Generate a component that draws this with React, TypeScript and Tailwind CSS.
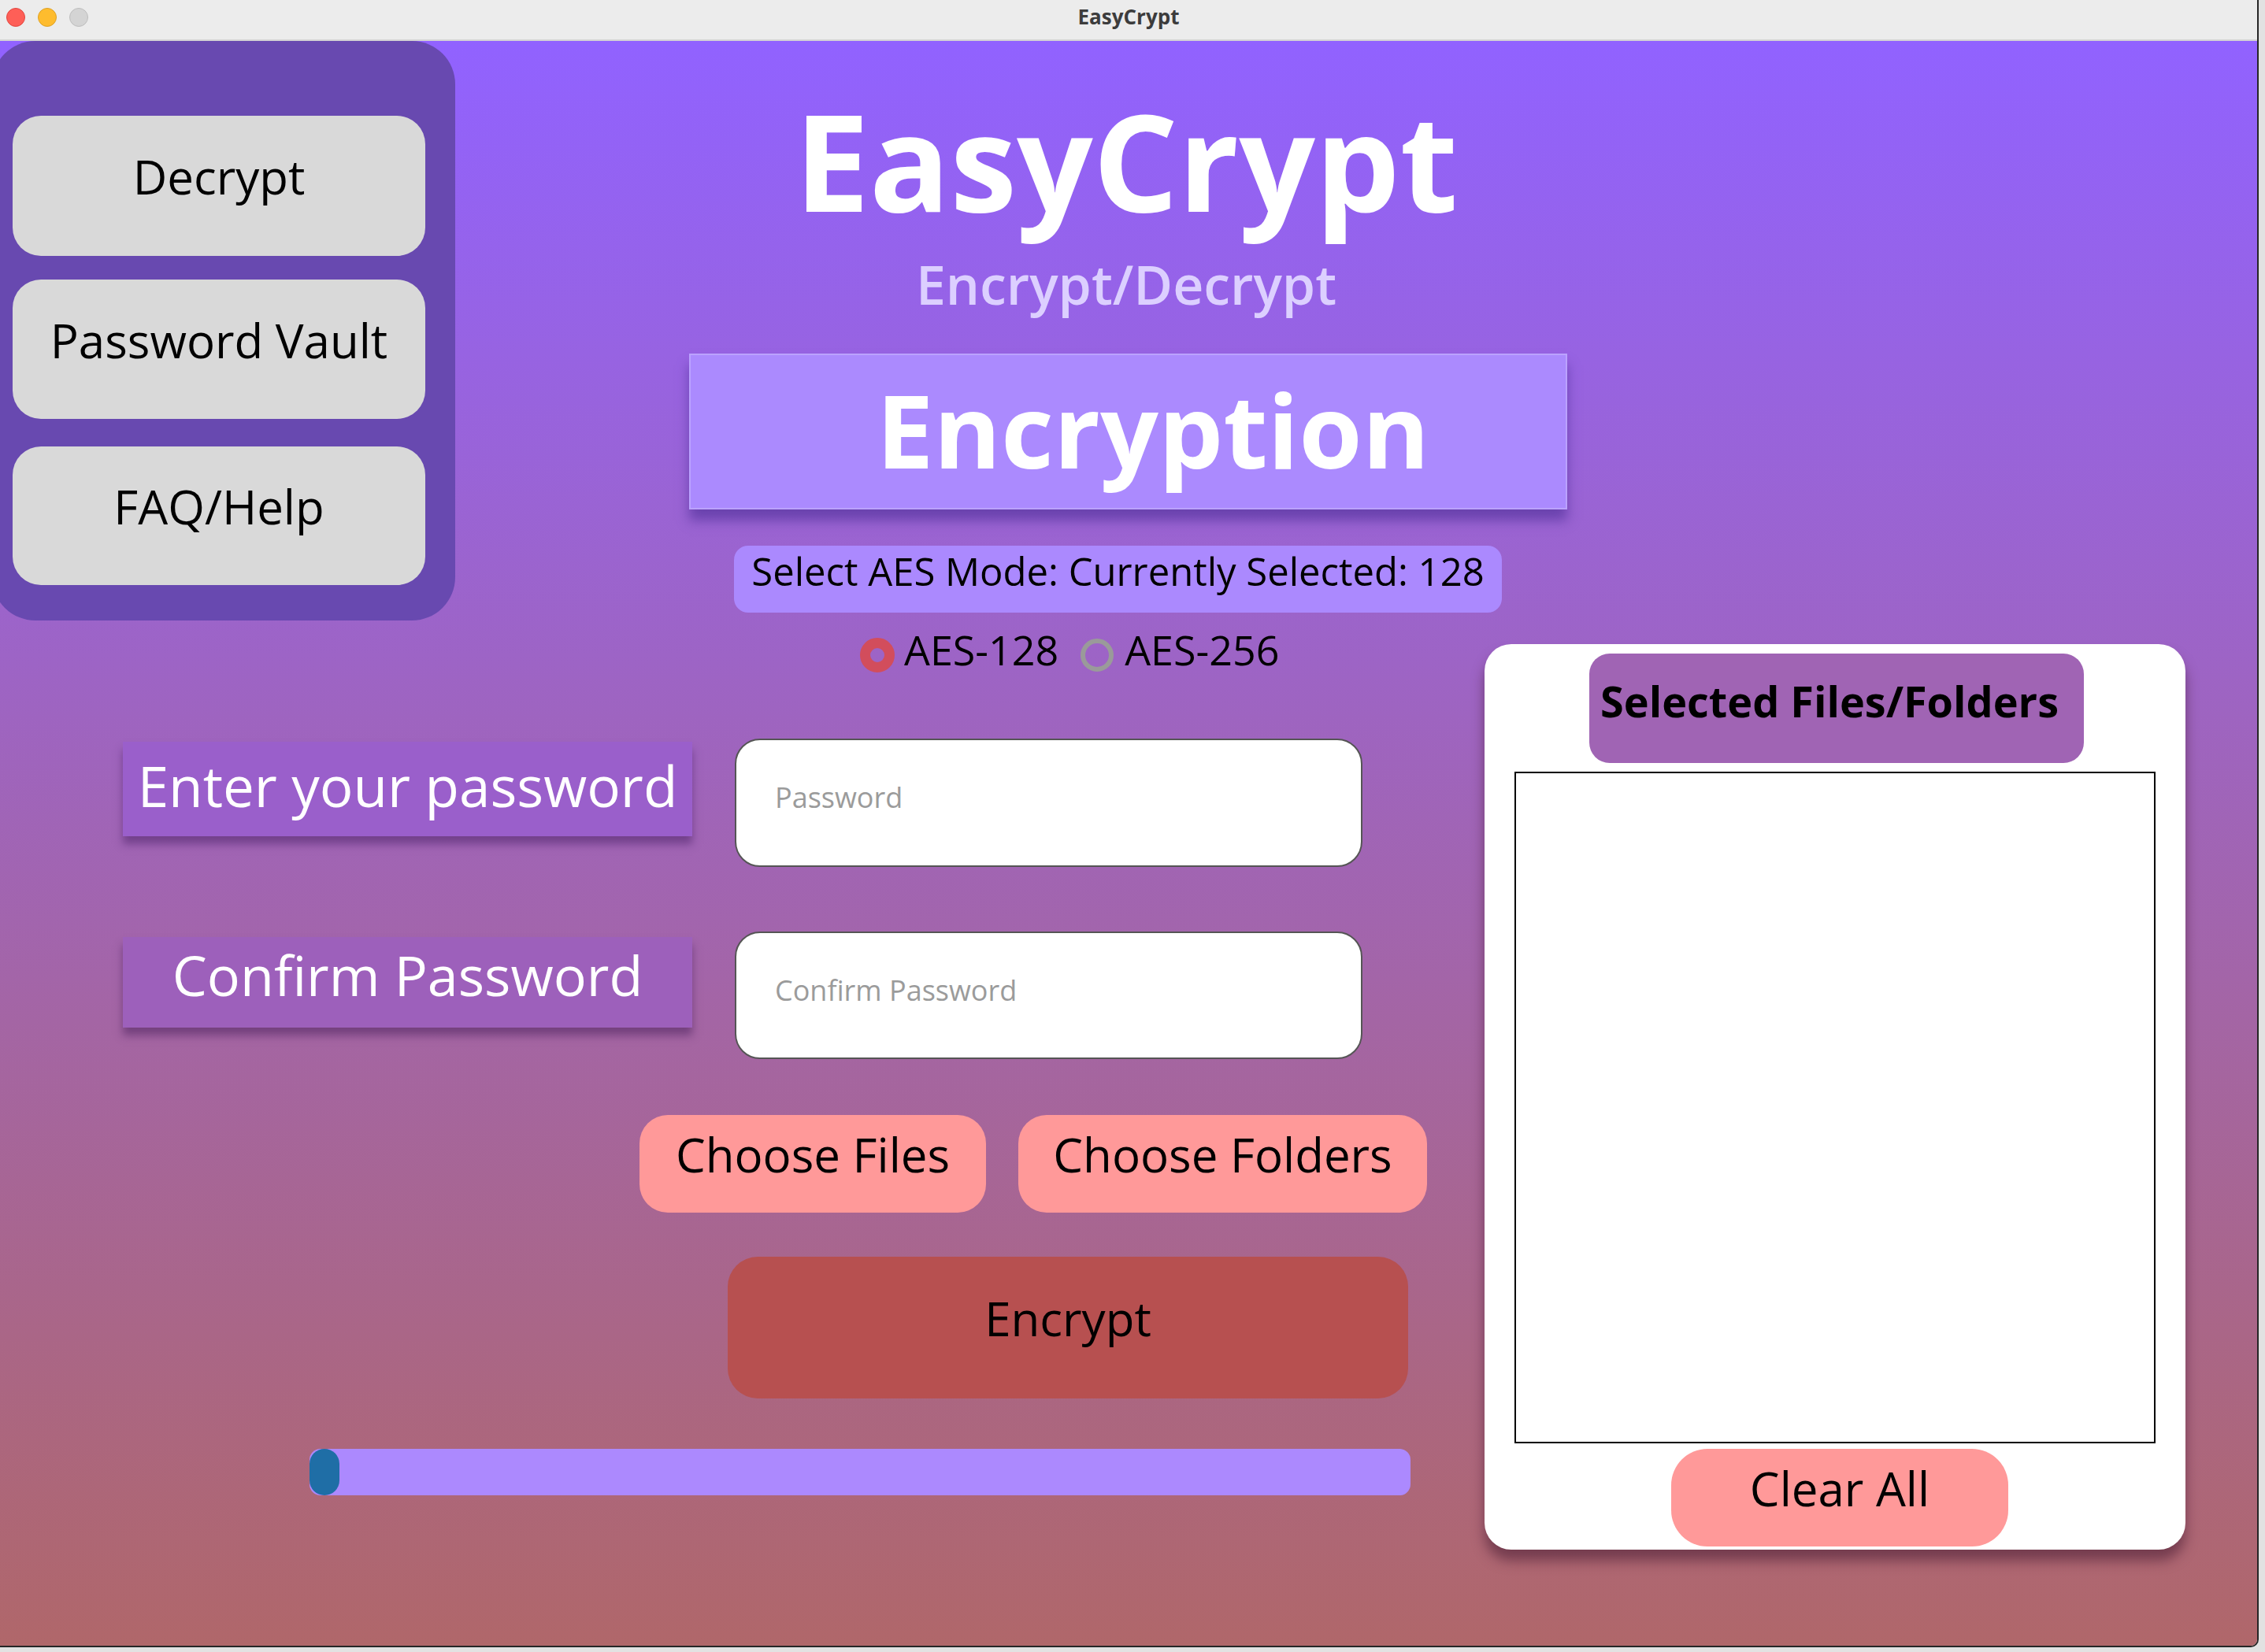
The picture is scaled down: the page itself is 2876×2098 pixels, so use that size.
import React from "react";

export default function App() {
  return (
    <div className="w-[2876px] h-[2098px] bg-[#e2e2e2] font-['Open_Sans',sans-serif] overflow-hidden">
      <div className="w-[2868px] h-[2092px] flex flex-col border-r-2 border-b-2 border-[#262626] rounded-br-[10px] overflow-hidden">
        {/* Title bar */}
        <div className="relative h-[52px] shrink-0 bg-[#ececec] border-b-2 border-[#d4d4d4] flex items-center justify-center pb-[8px]">
          <div className="absolute left-[8px] top-[10px] flex gap-[16px]">
            <span className="block w-[24px] h-[24px] rounded-full bg-[#fe5f57] border border-[#e2463f]" />
            <span className="block w-[24px] h-[24px] rounded-full bg-[#febc2e] border border-[#dea123]" />
            <span className="block w-[24px] h-[24px] rounded-full bg-[#d4d4d4] border border-[#bdbdbd]" />
          </div>
          <span className="text-[26px] font-bold text-[#3c3c3c] leading-none">EasyCrypt</span>
        </div>

        {/* Main */}
        <div className="flex-1 flex flex-col bg-[linear-gradient(to_bottom,#9162ff,#b0676a)]">
          {/* Top row */}
          <div className="flex items-start h-[736px]">
            <div className="-ml-[10px] w-[588px] h-[736px] shrink-0 rounded-[55px] bg-[#6849b0] pl-[26px] pt-[95px] flex flex-col">
              <button className="w-[524px] h-[178px] rounded-[36px] bg-[#d9d9d9] flex items-center justify-center pb-[24px] text-[60px] leading-none text-black">
                Decrypt
              </button>
              <button className="mt-[30px] w-[524px] h-[177px] rounded-[36px] bg-[#d9d9d9] flex items-center justify-center pb-[24px] text-[60px] leading-none text-black">
                Password Vault
              </button>
              <button className="mt-[35px] w-[524px] h-[176px] rounded-[36px] bg-[#d9d9d9] flex items-center justify-center pb-[24px] text-[60px] leading-none text-black">
                FAQ/Help
              </button>
            </div>

            <div className="flex-1 flex flex-col items-center pr-[584px]">
              <h1 className="mt-[66px] text-[170px] leading-none font-bold text-white">EasyCrypt</h1>
              <div className="mt-[39px] text-[68px] leading-none font-semibold text-[#dccfff]">Encrypt/Decrypt</div>
              <div className="mt-[54px] ml-[4px] w-[1115px] h-[198px] bg-[#ab8afe] border-2 border-[#bba2ff] shadow-[0_14px_14px_rgba(75,45,150,0.6)] flex items-center justify-center pb-[6px] pl-[64px]">
                <span className="text-[130px] leading-none font-bold text-white">Encryption</span>
              </div>
              <div className="mt-[46px] mr-[21px] w-[975px] h-[85px] rounded-[18px] bg-[#ab89fe] flex justify-center pt-[8px]">
                <span className="text-[49px] leading-none text-black">Select AES Mode: Currently Selected: 128</span>
              </div>
            </div>
          </div>

          {/* Bottom row */}
          <div className="flex items-start">
            <div className="w-[1885px] shrink-0 flex flex-col">
              {/* Radios */}
              <div className="mt-[21px] h-[46px] pl-[1092px] flex items-center">
                <span className="block w-[44px] h-[44px] rounded-full border-[13px] border-[#d24d5c]" />
                <span className="ml-[12px] mb-[14px] text-[52px] leading-none text-black">AES-128</span>
                <span className="ml-[28px] block w-[42px] h-[42px] rounded-full border-[6px] border-[#9a9a9a]" />
                <span className="ml-[14px] mb-[14px] text-[52px] leading-none text-black">AES-256</span>
              </div>

              {/* Password row */}
              <div className="mt-[83px] pl-[156px] flex items-start">
                <div className="mt-[4px] w-[723px] h-[120px] bg-[#9a5fcb] shadow-[0_10px_10px_rgba(70,30,100,0.5)] flex items-center justify-center pb-[10px]">
                  <span className="text-[71px] leading-none text-white whitespace-nowrap">Enter your password</span>
                </div>
                <input
                  type="password"
                  placeholder="Password"
                  className="ml-[54px] w-[797px] h-[163px] rounded-[32px] border-2 border-[#555555] bg-white pl-[49px] pb-[14px] text-[36px] text-black placeholder:text-[#9b9b9b] outline-none"
                />
              </div>

              {/* Confirm row */}
              <div className="mt-[82px] pl-[156px] flex items-start">
                <div className="mt-[7px] w-[723px] h-[115px] bg-[#9d60bb] shadow-[0_10px_10px_rgba(70,30,90,0.5)] flex items-center justify-center pb-[20px]">
                  <span className="text-[70px] leading-none text-white whitespace-nowrap">Confirm Password</span>
                </div>
                <input
                  type="password"
                  placeholder="Confirm Password"
                  className="ml-[54px] w-[797px] h-[162px] rounded-[32px] border-2 border-[#555555] bg-white pl-[49px] pb-[14px] text-[36px] text-black placeholder:text-[#9b9b9b] outline-none"
                />
              </div>

              {/* Choose buttons */}
              <div className="mt-[71px] pl-[812px] flex gap-[41px]">
                <button className="w-[440px] h-[124px] rounded-[36px] bg-[#ff9999] flex items-center justify-center pb-[24px] text-[60px] leading-none text-black">
                  Choose Files
                </button>
                <button className="w-[519px] h-[124px] rounded-[36px] bg-[#ff9999] flex items-center justify-center pb-[24px] text-[60px] leading-none text-black">
                  Choose Folders
                </button>
              </div>

              {/* Encrypt */}
              <button className="mt-[56px] ml-[924px] w-[864px] h-[180px] rounded-[38px] bg-[#b75050] flex items-center justify-center pb-[24px] text-[60px] leading-none text-black">
                Encrypt
              </button>

              {/* Progress */}
              <div className="mt-[64px] ml-[393px] w-[1398px] h-[59px] rounded-[14px] bg-[#ac89fe] flex">
                <div className="w-[38px] h-[59px] rounded-[19px] bg-[#1f6ea6]" />
              </div>
            </div>

            {/* Card */}
            <div className="mt-[30px] w-[890px] h-[1150px] shrink-0 rounded-[34px] bg-white shadow-[0_14px_16px_rgba(70,25,50,0.55)] flex flex-col items-center pt-[12px]">
              <div className="ml-[4px] w-[628px] h-[139px] rounded-[26px] bg-[#a064b4] flex items-center justify-center pb-[20px] pr-[18px]">
                <span className="text-[54px] leading-none font-bold text-black whitespace-nowrap">Selected Files/Folders</span>
              </div>
              <div className="mt-[11px] w-[814px] h-[853px] border-2 border-black bg-white" />
              <button className="mt-[7px] ml-[12px] w-[428px] h-[124px] rounded-[46px] bg-[#ff9999] flex items-center justify-center pb-[24px] text-[60px] leading-none text-black">
                Clear All
              </button>
            </div>
          </div>
        </div>
      </div>
    </div>
  );
}
